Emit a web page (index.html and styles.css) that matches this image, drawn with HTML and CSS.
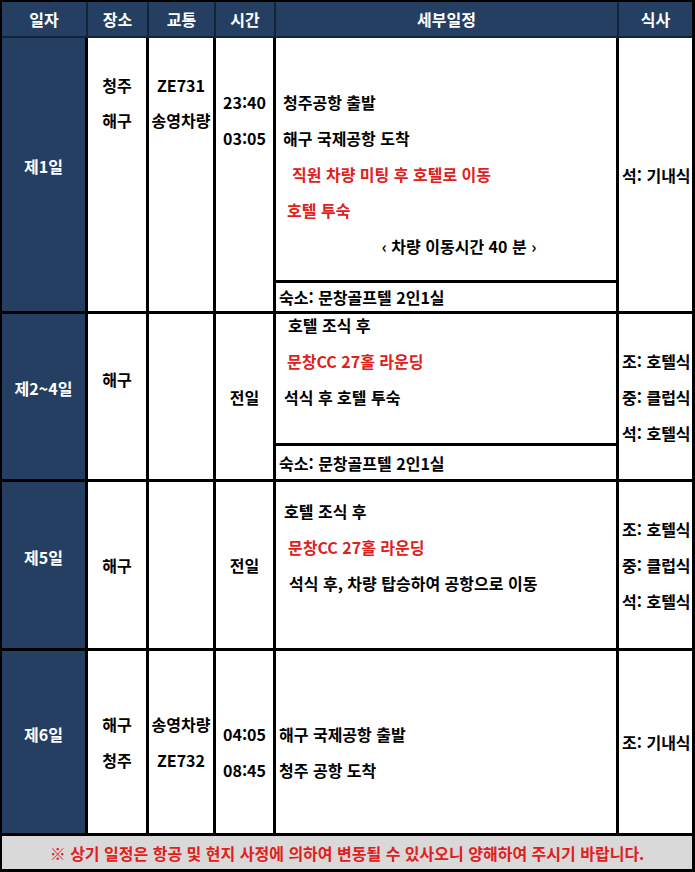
FILE: index.html
```html
<!DOCTYPE html>
<html lang="ko">
<head>
<meta charset="utf-8">
<title>일정표</title>
<link rel="stylesheet" href="styles.css">
</head>
<body>
<div class="sheet">
  <div class="table">
    <div class="head">일자</div>
    <div class="head">장소</div>
    <div class="head">교통</div>
    <div class="head">시간</div>
    <div class="head">세부일정</div>
    <div class="head last">식사</div>

    <!-- 제1일 -->
    <div class="cell day">제1일</div>
    <div class="cell col top30"><span>청주</span><span>해구</span></div>
    <div class="cell col top30"><span>ZE731</span><span>송영차량</span></div>
    <div class="cell col top46 lh36"><span>23:40</span><span>03:05</span></div>
    <div class="cell detail">
      <div class="main top46">
        <div class="ln p7">청주공항 출발</div>
        <div class="ln p7">해구 국제공항 도착</div>
        <div class="ln p16 red">직원 차량 미팅 후 호텔로 이동</div>
        <div class="ln p11 red">호텔 투숙</div>
        <div class="ln mid">‹ 차량 이동시간 40 분 ›</div>
      </div>
      <div class="stay s1">숙소: 문창골프텔 2인1실</div>
    </div>
    <div class="cell meal last"><span>석: 기내식</span></div>

    <!-- 제2~4일 -->
    <div class="cell day">제2~4일</div>
    <div class="cell col lift"><span>해구</span></div>
    <div class="cell col"></div>
    <div class="cell col"><span>전일</span></div>
    <div class="cell detail">
      <div class="main up7">
        <div class="ln p12">호텔 조식 후</div>
        <div class="ln p11 red">문창CC 27홀 라운딩</div>
        <div class="ln p8">석식 후 호텔 투숙</div>
      </div>
      <div class="stay s2">숙소: 문창골프텔 2인1실</div>
    </div>
    <div class="cell meal last"><span>조: 호텔식</span><span>중: 클럽식</span><span>석: 호텔식</span></div>

    <!-- 제5일 -->
    <div class="cell day">제5일</div>
    <div class="cell col"><span>해구</span></div>
    <div class="cell col"></div>
    <div class="cell col"><span>전일</span></div>
    <div class="cell detail">
      <div class="main top11">
        <div class="ln p8">호텔 조식 후</div>
        <div class="ln p12 red">문창CC 27홀 라운딩</div>
        <div class="ln p13">석식 후, 차량 탑승하여 공항으로 이동</div>
      </div>
    </div>
    <div class="cell meal last"><span>조: 호텔식</span><span>중: 클럽식</span><span>석: 호텔식</span></div>

    <!-- 제6일 -->
    <div class="cell day">제6일</div>
    <div class="cell col lh36"><span>해구</span><span>청주</span></div>
    <div class="cell col lh36"><span>송영차량</span><span>ZE732</span></div>
    <div class="cell col lh36 down"><span>04:05</span><span>08:45</span></div>
    <div class="cell detail">
      <div class="main center-v down">
        <div class="ln p3">해구 국제공항 출발</div>
        <div class="ln p3">청주 공항 도착</div>
      </div>
    </div>
    <div class="cell meal last"><span>조: 기내식</span></div>
  </div>
  <div class="foot">※ 상기 일정은 항공 및 현지 사정에 의하여 변동될 수 있사오니 양해하여 주시기 바랍니다.</div>
</div>
</body>
</html>
```

FILE: styles.css
```css
* {
  box-sizing: border-box;
  margin: 0;
  padding: 0;
}

body {
  margin: 0;
  background: #ffffff;
  font-family: "Noto Sans CJK KR", "Noto Sans", sans-serif;
  font-weight: 700;
  font-size: 16px;
  color: #000000;
}

.sheet {
  width: 695px;
  height: 872px;
  border: 2px solid #000000;
  border-right-width: 3px;
  border-bottom-width: 3px;
  display: flex;
  flex-direction: column;
}

.table {
  display: grid;
  grid-template-columns: 86px 61px 67px 60px 343px 73px;
  grid-template-rows: 36px 276px 168px 169px 185px;
}

.head {
  background: #243f61;
  color: #ffffff;
  border-right: 2px solid #13233a;
  border-bottom: 2px solid #13233a;
  display: flex;
  align-items: center;
  justify-content: center;
}

.head.last {
  border-right: 0;
}

.cell {
  border-right: 3px solid #000000;
  border-bottom: 3px solid #000000;
  min-width: 0;
}

.cell.last {
  border-right: 0;
}

.day {
  background: #243f61;
  color: #ffffff;
  display: flex;
  align-items: center;
  justify-content: center;
  padding-bottom: 17px;
}

.col {
  display: flex;
  flex-direction: column;
  align-items: center;
  justify-content: center;
  line-height: 36px;
  white-space: nowrap;
}

.col.top30 {
  justify-content: flex-start;
  padding-top: 30px;
  line-height: 35px;
}

.col.top46 {
  justify-content: flex-start;
  padding-top: 46px;
}

.col.lift {
  padding-bottom: 36px;
}

.col.down {
  padding-top: 19px;
}

.detail {
  display: flex;
  flex-direction: column;
}

.main {
  flex: 1;
  display: flex;
  flex-direction: column;
}

.main.top46 {
  padding-top: 46px;
}

.main.top11 {
  padding-top: 11px;
}

.main.up7 {
  margin-top: -7px;
}

.main.center-v {
  justify-content: center;
}

.main.down {
  padding-top: 19px;
}

.ln {
  line-height: 36px;
  white-space: nowrap;
}

.p3 { padding-left: 3px; }
.p7 { padding-left: 7px; }
.p8 { padding-left: 8px; }
.p11 { padding-left: 11px; }
.p12 { padding-left: 12px; }
.p13 { padding-left: 13px; }
.p16 { padding-left: 16px; }

.mid {
  text-align: center;
  padding-left: 26px;
}

.red {
  color: #e0201c;
}

.stay {
  border-top: 3px solid #000000;
  padding-left: 3px;
  display: flex;
  align-items: center;
  white-space: nowrap;
}

.stay.s1 {
  height: 31px;
}

.stay.s2 {
  height: 36px;
}

.meal {
  display: flex;
  flex-direction: column;
  justify-content: center;
  padding-left: 3px;
  line-height: 36px;
  white-space: nowrap;
}

.foot {
  flex: 1;
  background: #d9d9d9;
  color: #e0201c;
  display: flex;
  align-items: center;
  justify-content: center;
  white-space: nowrap;
}
```
